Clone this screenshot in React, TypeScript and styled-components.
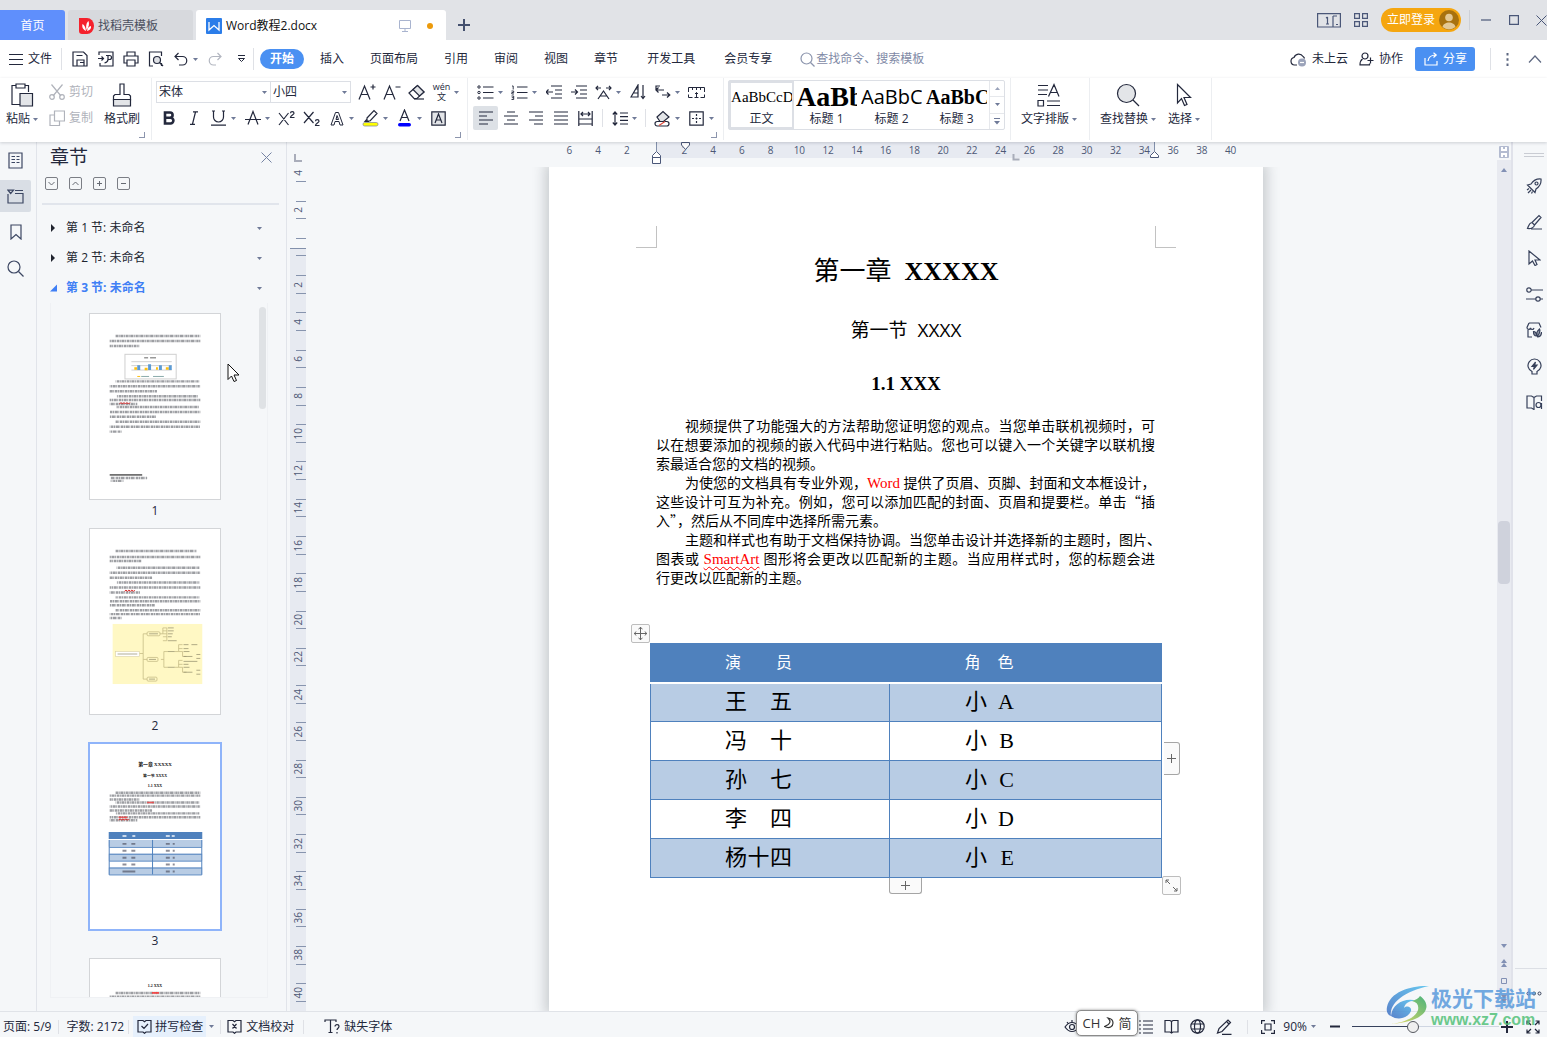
import React from "react";
import styled, { createGlobalStyle, css } from "styled-components";

const ui = `"Open Sans", "Noto Sans CJK SC", sans-serif`;
const serif = `"Liberation Serif", "Noto Sans CJK SC", serif`;

const Global = createGlobalStyle`
  * { box-sizing: border-box; }
  body { margin: 0; background: #f5f7f9; color: #23283c; font: 12px/16px ${ui}; overflow: hidden; }
  button, input, select { font: inherit; color: inherit; margin: 0; padding: 0; border: 0; background: none; }
  button { cursor: default; white-space: nowrap; }
  h1, h2, h3, p, figure { margin: 0; }
  svg { display: block; flex: none; }
`;

/* ---------- icons ---------- */
type IconProps = { w?: number; h?: number; box?: string; sw?: number; children: React.ReactNode };
const Icon = ({ w = 16, h = w, box, sw = 1.2, children }: IconProps) => (
  <svg width={w} height={h} viewBox={box || `0 0 ${w} ${h}`} fill="none" stroke="currentColor" strokeWidth={sw} aria-hidden="true">
    {children}
  </svg>
);
const Caret = () => (
  <svg width="5" height="3" viewBox="0 0 5 3" aria-hidden="true"><path d="M0 0h5L2.5 3z" fill="#6f7a98" /></svg>
);

const icons = {
  menu: <Icon w={14} h={12} sw={1}><path d="M0 1.500h14M0 6.500h14M0 11.500h14" /></Icon>,
  save: <Icon><path d="M1 1h10.5L15 4.5V15H1zM5 15V9h7v6M4.5 4.5h6M12 11.5H8" /></Icon>,
  exportPdf: <Icon><path d="M1 4V1h14v14H2v-3M0 7.5h5M3.5 5.5l2 2-2 2M8 4.500h3.500a2 2 0 0 1 0 4H10M10 4.500v4c0 2-1.500 3-3.500 3.500" /></Icon>,
  print: <Icon><path d="M4 5V1h8v4M4 12H1V5h14v7h-3M4 9h8v6H4z" /></Icon>,
  preview: <Icon><path d="M5 15H1.500V1h12v4M13.500 12v3" /><circle cx="9" cy="9" r="3.500" fill="#dfe1e5" /><path d="M11.500 11.500L15 15" /></Icon>,
  undo: <Icon w={14} h={14}><path d="M4.500 1L1 4.500 4.500 8M1 4.500h7.500a4.250 4.250 0 0 1 0 8.500H5" /></Icon>,
  redo: <Icon w={14} h={14}><path d="M9.500 1L13 4.500 9.500 8M13 4.500H5.500a4.250 4.250 0 0 0 0 8.500H8" /></Icon>,
  more: <Icon w={9} h={8} sw={1}><path d="M1 .5h7M1.500 3.500L4.500 6.500 7.500 3.500z" /></Icon>,
  search: <Icon w={15} sw={1.2}><circle cx="6.500" cy="6.500" r="5.500" /><path d="M10.500 10.500L14.500 14.500" /></Icon>,
  cloud: <Icon w={17} h={15}><path d="M7 13H4.500a3.800 3.800 0 0 1-.5-7.500A5 5 0 0 1 13 4.500M13 4.500a3 3 0 0 1 1.500 2" /><circle cx="12" cy="10.500" r="4" fill="#9ba3ba" stroke="none" /><path d="M10 10.500h4" stroke="#fff" /></Icon>,
  addUser: <Icon w={15} h={14}><circle cx="6" cy="4" r="3" /><path d="M3.500 7C2 8 1 9.500 1 12.800h9.500v-1.300M11.500 5.500v6M8.500 8.500h6" /></Icon>,
  share: <Icon w={14} h={14}><path d="M1 6v7h12V9M4 9c.5-4 3-6 8-6M9.500.8L12.200 3 9.500 5.500" /></Icon>,
  dots: <Icon w={3} h={13}><path d="M1.500 0v2.500M1.500 5.200v2.500M1.500 10.500V13" strokeWidth="2" /></Icon>,
  up: <Icon w={14} h={8}><path d="M1 7.500L7 1l6 6.500" /></Icon>,
  paste: <Icon w={24}><path d="M10 21.500H2V2.500h4M15 2.500h3.500V9" /><path d="M6 1h9v4H6z" /><path d="M10 10.500h12.500v12.500H10z" fill="#e3e5e8" /></Icon>,
  cut: <Icon><path d="M2.500.5L12 12M13.500.5L4 12" /><circle cx="3" cy="13" r="2.300" /><circle cx="13" cy="13" r="2.300" /></Icon>,
  copy: <Icon><path d="M5.500 1h10v10h-10zM5.500 5H1v10.500h9.500V11" /></Icon>,
  brush: <Icon w={20} h={24}><path d="M8 1h4v10.500h5l1.500 1.500v4h-17v-4L3 11.500h5z" /><path d="M1.500 16.500h17V23h-17z" fill="#e3e5e8" /></Icon>,
  grow: <Icon w={18} h={16}><path d="M1 15.500L6.500 2 12 15.500M3 10.500h7M12.500 3h5M15 .5v5" /></Icon>,
  shrink: <Icon w={18} h={16}><path d="M1 15.500L6.500 2 12 15.500M3 10.500h7M12.500 3h5" /></Icon>,
  eraser: <Icon w={17} h={16}><path d="M1 9l8.500-7.500L16 8l-7 6.500H6z" /><path d="M5 5.500L9.500 1.500 16 8l-4.500 4z" fill="#e3e5e8" /><path d="M6 15h10" /></Icon>,
  bold: <Icon w={14} h={14} sw={2.600}><path d="M3 1.500h5a2.600 2.600 0 0 1 0 5.200H3zM3 6.700h5.500a2.900 2.900 0 0 1 0 5.800H3z" /></Icon>,
  italic: <Icon w={12} h={14}><path d="M5 .8h5M2 13.300h5M7.500 1L4.500 13" /></Icon>,
  underline: <Icon w={15} h={16}><path d="M1 1h3M11 1h3M2.500 1v6a5 5 0 0 0 10 0V1M0 15.200h15" /></Icon>,
  strike: <Icon w={16} h={16}><path d="M3 14.500L8 1.500l5 13M0 9.500h16" /></Icon>,
  sup: <Icon w={17} h={15}><path d="M1 2l9.500 12M10.500 2L1 14M12.500 2.200c0-2 3.500-2 3.500 0 0 1.500-3.500 2.300-3.500 4.300h4" /></Icon>,
  sub: <Icon w={17} h={15}><path d="M1 1l9.500 11M10.500 1L1 12M12.500 10.200c0-2 3.500-2 3.500 0 0 1.500-3.500 2.300-3.500 4.300h4" /></Icon>,
  outlineA: <Icon w={14} h={15} sw={1}><path d="M1 14L5.500 1.500h3L13 14h-3L9 10.500H5L4 14zM6 8.500L7 4.500l1.500 4z" /></Icon>,
  highlight: <Icon w={17} h={18}><path d="M5 9l7-7.500 3 3-7 7.500H5zM5 10l-2 2.500h4" /><rect x="1" y="13.500" width="15" height="3.500" rx="1.700" fill="#ffff00" stroke="#8a8f9d" strokeWidth=".8" /></Icon>,
  colorA: <Icon w={15} h={18}><path d="M3 12L7.500 1 12 12M4.500 8.500h6" /><rect x="1" y="14" width="13" height="3.500" rx="1.700" fill="#0000ff" stroke="none" /></Icon>,
  boxA: <Icon w={15} h={15}><path d="M.8.8h13.400v13.400H.8z" fill="#e3e5e8" /><path d="M4 12l3.500-9L11 12M5 9h5" /></Icon>,
  bullets: <Icon w={17} h={15}><circle cx="2" cy="2" r="1.200" strokeWidth="1" /><circle cx="2" cy="7.500" r="1.200" strokeWidth="1" /><circle cx="2" cy="13" r="1.200" strokeWidth="1" /><path d="M6 2h10.500M6 7.500h10.500M6 13h10.500" /></Icon>,
  numbers: <Icon w={17} h={15}><path d="M1 1h1.200v3.500M.5 6h2.200v1.500H.8V9H3M.5 11h2.200v3.500H.5M.8 12.700h2" strokeWidth=".9" /><path d="M6 2h10.500M6 7.500h10.500M6 13h10.500" /></Icon>,
  outdent: <Icon w={16} h={14}><path d="M5 1h11M9 5h7M9 9h7M5 13h11M0 7h7M2.500 4.500L0 7l2.500 2.500" /></Icon>,
  indent: <Icon w={16} h={14}><path d="M5 1h11M9 5h7M9 9h7M5 13h11M0 7h6.500M4 4.500L6.500 7 4 9.500" /></Icon>,
  charScale: <Icon w={17} h={15}><path d="M1 3h5M3 .8L1 3l2 2.200M11 3h5M14 .8L16 3l-2 2.200M3 14L8.500 6l5.500 8M5.500 11h6" /></Icon>,
  sort: <Icon w={16} h={16}><path d="M1 13L8 1v12zM3.500 9H8M5.500 5H8M13 1v13.500M11 12l2 2.500 2-2.500" /></Icon>,
  wrap: <Icon w={16} h={14}><path d="M5 1H1v4h8M3.500 2.500L1 5l2.500 2.500M7 10h8M12 7.500l2.800 2.500L12 12.500" /></Icon>,
  tabs: <Icon w={17} h={13} sw={1}><path d="M.5 6V1.500h16V6M4.500 1.500V4M8.500 1.500V4M12.500 1.500V4M.5 8.500v3h4M16.500 8.500v3h-4M8.500 6.500v5M6.500 11.500h4M7 8l1.500-1.500L10 8" /></Icon>,
  alignL: <Icon w={14} h={14}><path d="M0 1h14M0 5h8M0 9h14M0 13h9" /></Icon>,
  alignC: <Icon w={14} h={14}><path d="M3 1h8M0 5h14M3 9h8M0 13h14" /></Icon>,
  alignR: <Icon w={14} h={14}><path d="M0 1h14M6 5h8M0 9h14M5 13h9" /></Icon>,
  justify: <Icon w={14} h={14}><path d="M0 1h14M0 5h14M0 9h14M0 13h14" /></Icon>,
  distribute: <Icon w={15} h={15}><path d="M.8 0v15M14.200 0v15M3 3h9M5 1L3 3l2 2M10 1l2 2-2 2M1 8h13M1 13h13" /></Icon>,
  lineGap: <Icon w={16} h={15}><path d="M3 1v13M.8 3.500L3 1l2.200 2.500M.8 11.500L3 14l2.200-2.500M8 2h8M8 5.600h8M8 9.300h8M8 13h8" /></Icon>,
  fill: <Icon w={17} h={17}><path d="M3 7l6-5.500L15 7l-5.500 4.500H6z" fill="#e3e5e8" /><rect x="1" y="11.500" width="14" height="4.500" rx="2.200" fill="#fff" /><path d="M5 15.500l6-4" stroke="#e04a3a" /></Icon>,
  borders: <Icon w={15} h={15}><path d="M.8.8h13.400v13.400H.8z" /><path d="M7.500 3v9.500M3 7.500h9.500" strokeDasharray="2 1.500" /></Icon>,
  textLayout: <Icon w={24}><path d="M1 2.500h10M1 7h10M1 11.500h9M11.500 13.500L17 1.500l5 12M13.500 9.500h7M1 17.500h5.500V23H1zM10 18h13M10 22.500h13" /></Icon>,
  find: <Icon w={24}><circle cx="10.500" cy="10.500" r="9" fill="#e3e5e8" /><path d="M17 17l6 6" /></Icon>,
  pointer: <Icon w={16} h={24}><path d="M1.500 1.500v18.500l4-4.500 3 7 2.500-1-3-7h6.500z" /></Icon>,
  close: <Icon w={11} h={11} sw={1}><path d="M.5.5l10 10M10.500.5l-10 10" /></Icon>,
  rail1: <Icon w={15} h={17}><path d="M1 1h13v15H1zM3.500 4.500h3.500M3.500 7.500h3.500M3.500 10.500h3.500M8.500 4.500h3M8.500 7.500h3M8.500 10.500h3" /></Icon>,
  rail2: <Icon w={17} h={15}><path d="M1 5v9h15V4.500H8M8 1.500h8M1 1.200h5.500L3.700 4.500z" /></Icon>,
  bookmark: <Icon w={12} h={16}><path d="M1 1h10v14l-5-4.500L1 15z" /></Icon>,
  railFind: <Icon w={17}><circle cx="7" cy="7" r="6" /><path d="M11.500 11.500l5 5" /></Icon>,
  rocket: <Icon><path d="M15 1c-5-.5-8 2-10 5L1.500 7l2 2 3.500 3.500 2 2 1-3.500c3-2 5.500-5 5-10zM1 12l2-1.500M2 15l3-3M5.500 15.500L6.500 13.500" /><circle cx="10.500" cy="5.500" r="1.500" /></Icon>,
  paint: <Icon><path d="M6 8.500L13 1.500l2 2L8.500 11M6 8.500L8.500 11c-.5 3-4 4-7 3.500 1.500-3.500 1.500-5.500 4.500-6zM5 15h11" /></Icon>,
  cursor: <Icon w={14} h={16}><path d="M2 1v13l3.500-3 2.500 4.500 2-1-2-4.500h5z" /></Icon>,
  sliders: <Icon w={17} h={15}><circle cx="3" cy="3" r="2.200" /><circle cx="12" cy="12" r="2.200" /><path d="M5.200 3H17M0 12h9.800M14.200 12H17" /></Icon>,
  shop: <Icon><path d="M3 1h10l2 4.500M3 1L1 5.500c0 2.500 3 2.500 3.500.5.500 2 3 2 3.500 0M2 8v7h4" /><path d="M7.500 9.500c2 0 3 1 3 4.500-2 0-3-1.500-3-4.500zM13.500 7c1.500 3-1 6-2 7.500-1.500-3-.5-5.500 2-7.500zM15.500 10c0 3-1.500 5-4 5" fill="#9aa0ae" /></Icon>,
  bulb: <Icon w={15} h={17}><path d="M5 16h5v-2.500a6.500 6.500 0 1 0-5 0z" /><path d="M8.500 4L5 8.500h2.500L6.500 11.500 10 7H7.500z" fill="currentColor" /></Icon>,
  bookFind: <Icon w={17} h={15}><path d="M8 2.500L5.500 1H1v12h4.500L8 14.500zM8 2.500L10.500 1H15.500v5" /><circle cx="12.500" cy="10" r="2.500" /><path d="M15.500 8v6" /></Icon>,
  spell: <Icon w={15} h={15}><path d="M6 1.500H1v11.500h5l1.500 1.300L9 13h5V1.500H9L7.500 2.800zM4.500 7l2.500 2.500 4-4.500" /></Icon>,
  proof: <Icon w={15} h={15}><path d="M6 1.500H1v11.500h5l1.500 1.300L9 13h5V1.500H9L7.500 2.800zM5.500 5l4 4.500M9.500 5l-4 4.500" /></Icon>,
  fontMiss: <Icon w={16} h={15}><path d="M1 3V1h11v2M6.500 1v12.500M4.500 13.500h4M11 7.500c0-2.500 4-2.500 4 0 0 1.700-2 1.700-2 3.500M13 13v1.500" /></Icon>,
  eye: <Icon><path d="M1 8c4-6 10-6 14 0-4 6-10 6-14 0zM3 3l1.500 2M8 1v2" /><circle cx="8" cy="8" r="2.500" /></Icon>,
  list: <Icon w={14} h={14}><path d="M0 1h2M4 1h10M0 5h2M4 5h10M0 9h2M4 9h10M0 13h2M4 13h10" /></Icon>,
  book: <Icon w={15} h={15}><path d="M7.500 2.500L6 1.500H1v11.500h5l1.500 1L9 13h5V1.500H9zV14" /></Icon>,
  globe: <Icon w={15}><circle cx="7.500" cy="7.500" r="6.700" /><ellipse cx="7.500" cy="7.500" rx="3" ry="6.700" /><path d="M1.500 5h12M1.500 10h12" /></Icon>,
  pen: <Icon><path d="M1.500 14L3 9.500 12 1l2.500 2.500L6 12.500zM11 3l2 2M6 15.300h9.500" /></Icon>,
  fit: <Icon w={14} h={14}><path d="M.6 4V.6H4M10 .6h3.400V4M13.400 10v3.400H10M4 13.400H.6V10M4 4h6v6H4z" /></Icon>,
  full: <Icon w={14} h={14}><path d="M9 5l4-4M9.500 1H13v3.500M5 5L1 1M1 4.500V1h3.500M9 9l4 4M13 9.500V13H9.500M5 9l-4 4M1 9.500V13h3.500" /></Icon>,
  plus: <Icon w={12} h={12} sw={2}><path d="M6 0v12M0 6h12" /></Icon>,
  minus: <Icon w={10} h={3} sw={2}><path d="M0 1.500h10" /></Icon>,
};

/* ---------- frame ---------- */
const Shell = styled.div`position: relative; display: flex; flex-direction: column; height: 100vh; overflow: hidden;`;
const Spacer = styled.div`flex: 1;`;
const Rule = styled.span<{ $h: number; $m?: number; $c?: string }>`
  flex: none; width: 1px; height: ${p => p.$h}px; margin: 0 ${p => p.$m || 0}px; background: ${p => p.$c || "#dfe1e6"};
`;

const TitleBar = styled.header`display: flex; align-items: flex-end; height: 40px; background: #e1e3e7; overflow: hidden;`;
const Tab = styled.button<{ $w: number; $kind: "home" | "idle" | "active" }>`
  display: flex; align-items: center; gap: 4px; flex: none; width: ${p => p.$w}px; height: 30px; margin-right: 3px; padding: 1px 11px 0;
  border-radius: 3px 3px 0 0; text-align: left; background: #d7d9dd; color: #4b5060;
  ${p => p.$kind === "home" && css`justify-content: center; background: #5f8ffc; color: #fff; border-radius: 0 3px 0 0;`}
  ${p => p.$kind === "active" && css`background: #fff; color: #111; padding: 1px 13px 0 10px;`}
`;
const Unsaved = styled.span`width: 6px; height: 6px; margin-left: 12px; border-radius: 3px; background: #ec9a0b;`;
const NewTab = styled.button`display: flex; align-items: center; justify-content: center; width: 30px; height: 30px; color: #44506e;`;
const WindowTools = styled.div`display: flex; align-items: center; height: 40px; gap: 13px; color: #4a5778; margin-right: -2px;`;
const Login = styled.button`
  display: flex; align-items: center; gap: 4px; height: 24px; padding: 0 2px 0 6px; border-radius: 12px; background: #f5a60f; color: #fff;
`;
const WinButton = styled.button`display: flex; align-items: center; justify-content: center; width: 15px; height: 24px;`;

const MenuBar = styled.nav`display: flex; align-items: center; height: 38px; padding-left: 9px; background: #fff; color: #23283c;`;
const IconButton = styled.button<{ $w?: number; $dim?: boolean; $c?: string }>`
  display: flex; align-items: center; justify-content: center; flex: none; gap: 5px; width: ${p => (p.$w ? p.$w + "px" : "auto")}; height: 24px;
  color: ${p => p.$c || (p.$dim ? "#b2b6c0" : "inherit")};
`;
const MenuTabs = styled.div<{ $gap: number; $l: number }>`display: flex; align-items: center; gap: ${p => p.$gap}px; margin-left: ${p => p.$l}px;`;
const MenuItem = styled.button<{ $on?: boolean }>`
  height: 20px; ${p => p.$on && css`padding: 0 10px; margin-right: -10px; border-radius: 10px; background: #4a90f2; color: #fff; font-weight: bold;`}
`;
const Search = styled.label`display: flex; align-items: center; gap: 1px; margin-left: 28px; color: #8c95ad;
  input { width: 120px; outline: 0; } input::placeholder { color: #7f8aa6; opacity: 1; }`;
const Share = styled.button`
  display: flex; align-items: center; gap: 5px; height: 24px; margin: 0 15px 0 12px; padding: 0 8px 0 9px; border-radius: 3px; background: #4a90f2; color: #fff;
`;

/* ---------- ribbon ---------- */
const Ribbon = styled.section`
  position: relative; z-index: 2; display: flex; flex: none; height: 64px; background: #fff; box-shadow: 0 1px 3px rgba(40, 50, 70, .2);
`;
const Group = styled.div<{ $l: number; $r: number; $gap?: number; $corner?: boolean }>`
  position: relative; display: flex; flex: none; gap: ${p => p.$gap || 0}px; height: 62px; padding: 1px ${p => p.$r}px 0 ${p => p.$l}px; border-right: 1px solid #eceef1;
  ${p => p.$corner && css`&::after { content: ""; position: absolute; right: 6px; bottom: 2px; width: 5px; height: 5px; border: solid #8c95ad; border-width: 0 1px 1px 0; }`}
`;
const Rows = styled.div`display: flex; flex-direction: column;`;
const Row = styled.div`display: flex; align-items: center; height: 26px;`;
const Big = styled.button`display: flex; flex-direction: column; align-items: center; height: 52px;`;
const BigArt = styled.span`display: flex; align-items: center; height: 32px;`;
const BigLabel = styled.span`display: flex; align-items: center; gap: 3px;`;
const SmallAction = styled.button`display: flex; align-items: center; gap: 4px; height: 26px; color: #b0b3bb;`;
const ToolButton = styled.button<{ $on?: boolean; $caret?: boolean }>`
  display: flex; align-items: center; flex: none; width: ${p => (p.$caret ? 34 : 25)}px; height: 24px; border-radius: 2px; background: ${p => (p.$on ? "#dde1e6" : "none")};
`;
const Glyph = styled.span`display: flex; align-items: center; justify-content: center; width: 25px;`;
const Combo = styled.span<{ $w: number }>`
  display: flex; align-items: center; width: ${p => p.$w}px; height: 22px; padding-right: 3px; border: 1px solid #dcdfe5; & + & { border-left: 0; }
  select { flex: 1; min-width: 0; height: 20px; padding-left: 2px; appearance: none; outline: 0; }
`;
const Tool = ({ icon, label, caret, on }: { icon: React.ReactNode; label: string; caret?: boolean; on?: boolean }) => (
  <ToolButton aria-label={label} $caret={caret} $on={on}><Glyph>{icon}</Glyph>{caret && <Caret />}</ToolButton>
);
const BigTool = ({ icon, label, caret }: { icon: React.ReactNode; label: string; caret?: boolean }) => (
  <Big><BigArt>{icon}</BigArt><BigLabel>{label}{caret && <Caret />}</BigLabel></Big>
);
const RowRule = styled.span`width: 1px; height: 18px; margin: 0 4px; background: #dfe1e6;`;
const WenMark = styled.span`display: flex; flex-direction: column; align-items: center; font-size: 9px; line-height: 10px;`;

const Gallery = styled.div`display: flex; height: 50px; margin-top: 1px; border: 1px solid #dcdfe5; border-radius: 2px;`;
const StyleCard = styled.button<{ $on?: boolean }>`
  display: flex; flex-direction: column; align-items: center; justify-content: flex-end; width: 65px; height: 48px; padding: 0 1px;
  border: 2px solid ${p => (p.$on ? "#dcdfe5" : "transparent")};
`;
const Sample = styled.span<{ $size: number; $bold?: boolean; $sans?: boolean }>`
  width: 61px; height: 28px; overflow: hidden; text-align: left; color: #000;
  font: ${p => (p.$bold ? "bold" : "normal")} ${p => p.$size}px/28px ${p => (p.$sans ? ui : serif)};
`;
const GalleryScroll = styled.div`display: flex; flex-direction: column; width: 15px; border-left: 1px solid #e6e8ec;
  button { flex: 1; display: flex; align-items: center; justify-content: center; color: #7d88a6; }
  button + button { border-top: 1px solid #e6e8ec; }`;

/* ---------- workspace ---------- */
const Workspace = styled.div`display: flex; flex: 1; min-height: 0;`;
const Rail = styled.aside`display: flex; flex-direction: column; gap: 4px; flex: none; width: 37px; padding-top: 2px; border-right: 1px solid #e1e4ea; color: #3c4763;`;
const RailButton = styled.button<{ $on?: boolean }>`
  display: flex; align-items: center; justify-content: center; width: 31px; height: 32px; border-radius: 0 2px 2px 0; background: ${p => (p.$on ? "#d9dee5" : "none")};
`;
const Panel = styled.aside`display: flex; flex-direction: column; flex: none; width: 250px; border-right: 1px solid #e1e4ea;`;
const PanelHead = styled.div`display: flex; align-items: center; justify-content: space-between; height: 30px; padding: 0 14px 0 13px; color: #7583a3;
  h2 { font: 19px/28px ${ui}; color: #23283c; }`;
const PanelTools = styled.div`display: flex; align-items: center; gap: 11px; height: 23px; padding-left: 8px;
  button { display: flex; align-items: center; justify-content: center; width: 13px; height: 13px; border: 1px solid #7b7e85; border-radius: 2px; color: #666a73; }`;
const PanelRule = styled.hr`flex: none; width: 237px; height: 2px; margin: 8px 7px 8px 5px; border: 0; background: #e1e5ec;`;
const Section = styled.button<{ $open?: boolean }>`
  display: flex; align-items: center; flex: none; gap: 9px; height: 30px; padding: 0 24px 0 13px; text-align: left;
  color: ${p => (p.$open ? "#3f7ff5" : "#20242f")}; font-weight: ${p => (p.$open ? "bold" : "normal")};
  span { flex: 1; white-space: pre; }
`;
const ThumbList = styled.div`
  display: flex; flex: 1; min-height: 0; overflow: hidden; margin: 0 18px 13px 13px; padding: 10px 0 0 38px; border: solid #eff1f4; border-width: 0 1px 1px;
`;
const Thumb = styled.figure<{ $on?: boolean }>`
  width: 132px; height: 215px;
  svg { background: #fff; border: 1px solid ${p => (p.$on ? "#8fb4fa" : "#d3d5d8")}; outline: ${p => (p.$on ? "1px solid #8fb4fa" : "none")}; }
  figcaption { text-align: center; line-height: 22px; }
`;
const ThumbTrack = styled.div`width: 7px; height: 102px; margin: -6px 0 0 38px; border-radius: 4px; background: #dfe2e5;`;

const DocArea = styled.main`display: flex; flex: 1; min-width: 0;`;
const VRuler = styled.div`display: flex; flex-direction: column; flex: none; width: 28px; padding: 12px 9px 0 3px;`;
const VCell = styled.div<{ $live?: boolean; $zero?: boolean }>`
  position: relative; display: flex; align-items: center; justify-content: center; flex: 1; min-height: 37px; color: #4d5875; font-size: 10px;
  background: ${p => (p.$live ? "#e7eaf1" : p.$zero ? "linear-gradient(transparent 50%, #8290ab 50%, #8290ab calc(50% + 1px), #e7eaf1 calc(50% + 1px))" : "none")};
  &::before { content: ""; position: absolute; right: 0; top: 25%; bottom: 25%; width: 10px; border: solid #8794ae; border-width: 1px 0; }
  &:first-child::before { border-top: 0; }
  &:first-child::after { content: ""; position: absolute; left: 4px; top: 0; width: 6px; height: 6px; border: solid #a9adba; border-width: 0 0 2px 2px; }
  span { writing-mode: vertical-rl; transform: rotate(180deg); line-height: 14px; }
`;
const Center = styled.div`display: flex; flex-direction: column; align-items: center; flex: 1; min-width: 0; overflow: hidden;`;
const HRuler = styled.div`
  position: relative; display: flex; flex: none; width: 714px; height: 25px; padding: 0 18px 0 6px; color: #4d5875; font-size: 10px; line-height: 16px;
  background: linear-gradient(#e7eaf1, #e7eaf1) 107px 0 / 498px 16px no-repeat;
  span { flex: 1; text-align: center; }
`;
const RulerMarks = styled.svg`position: absolute; left: 0; top: 0;`;
const Paper = styled.div`align-self: stretch; display: flex; justify-content: center; flex: 1; min-height: 0; overflow: hidden;`;
const Page = styled.article`width: 714px; padding-top: 59px; background: #fff; color: #000; box-shadow: 0 0 12px 4px rgba(60, 65, 75, .24);`;
const Corners = styled.div`display: flex; justify-content: space-between; width: 540px; height: 22px; margin-left: 87px;
  i { width: 21px; border: solid #c2c2c2; border-width: 0 1px 1px 0; } i + i { border-width: 0 0 1px 1px; }`;
const Title = styled.h1`margin-top: 4px; text-align: center; white-space: pre; font: 26px/40px ${serif}; b { font-weight: bold; }`;
const Subtitle = styled.h2`margin-top: 18px; text-align: center; white-space: pre; font: 19px/40px ${ui};`;
const Heading = styled.h3`margin-top: 20px; text-align: center; font: bold 19px/28px ${serif};`;
const Body = styled.div`width: 499px; margin: 19px 0 0 107px; font: 14px/19px ${serif};`;
const Line = styled.span<{ $first?: boolean; $last?: boolean }>`
  display: block; height: 19px; padding-left: ${p => (p.$first ? 29 : 0)}px; white-space: nowrap; text-align-last: ${p => (p.$last ? "left" : "justify")};
`;
const Quote = styled.span`font-family: "Noto Sans CJK SC", sans-serif; line-height: 16px;`;
const Red = styled.span<{ $wavy?: boolean }>`font-size: 15px; line-height: 16px; color: #f00; ${p => p.$wavy && css`text-decoration: underline wavy #f00 1px; text-underline-offset: 2px;`}`;

const TableWrap = styled.div`position: relative; width: 512px; margin: 55px 0 0 101px;`;
const Table = styled.table`
  width: 512px; border-collapse: collapse; table-layout: fixed; border: 1px solid #4f81bd;
  th, td { height: 39px; padding: 0 0 0 74px; text-align: left; line-height: 30px; font-weight: normal; }
  th { padding-bottom: 2px; background: #4f81bd; color: #fff; font-size: 16px; border-bottom: 2px solid #fff; }
  th + th, td + td { padding-left: 75px; }
  td { border: 1px solid #4f81bd; font: 22px/30px ${serif}; }
  th:first-child { width: 239px; }
  tbody tr:nth-child(odd) td { background: #b8cce4; }
  tbody tr:first-child td { border-top: 0; }
`;
const Spread = styled.span<{ $w: number }>`display: block; width: ${p => p.$w}px; text-align-last: justify; white-space: nowrap;`;
const TableHandle = styled.button<{ $l: number; $t: number; $w: number; $h: number; $open?: "left" | "top" }>`
  position: absolute; left: ${p => p.$l}px; top: ${p => p.$t}px; display: flex; align-items: center; justify-content: center;
  width: ${p => p.$w}px; height: ${p => p.$h}px; border: 1px solid #bdbdbd; border-radius: 2px; background: #fafafa; color: #666;
  ${p => p.$open === "left" && css`border-left: 0; border-radius: 0 3px 3px 0; border-color: #a5a5a5;`}
  ${p => p.$open === "top" && css`border-top: 0; border-radius: 0 0 3px 3px; border-color: #a5a5a5;`}
`;

const ScrollColumn = styled.div`display: flex; flex-direction: column; align-items: center; flex: none; width: 16px; padding-right: 2px; background: linear-gradient(#e0e2ea, #e0e2ea) 100% 0 / 2px 100% no-repeat; color: #8290b4;`;
const ScrollTop = styled.div`display: flex; align-items: center; justify-content: center; height: 18px; padding-top: 2px;`;
const ScrollTrack = styled.div`display: flex; flex-direction: column; align-items: center; flex: 1; width: 14px; padding: 8px 0 8px; background: #e8eaf0;`;
const ScrollThumb = styled.div`width: 12px; height: 63px; border-radius: 4px; background: #cfd2dc;`;
const ScrollGap = styled.div<{ $n: number }>`flex: ${p => p.$n};`;
const ScrollMarks = styled.div`display: flex; flex-direction: column; align-items: center; gap: 11px;`;

const RightRail = styled.aside`display: flex; flex-direction: column; flex: none; align-items: flex-end; gap: 4px; width: 34px; color: #36405a;
  button { display: flex; align-items: center; justify-content: center; width: 26px; height: 32px; }`;
const Grip = styled.div`width: 20px; height: 4px; margin: 11px 3px 9px 0; border: solid #c9ccd3; border-width: 1px 0;`;
const RailFoot = styled.div`display: flex; justify-content: flex-end; align-items: flex-end; width: 32px; height: 43px; padding-bottom: 2px; border-top: 1px solid #dcdfe5;`;

/* ---------- status bar ---------- */
const Status = styled.footer`display: flex; align-items: center; flex: none; height: 26px; padding: 4px 7px 0 3px; border-top: 1px solid #e0e3e8; color: #23283c; white-space: nowrap;`;
const StatusItem = styled.button<{ $on?: boolean; $gap?: number }>`
  display: flex; align-items: center; gap: 4px; height: 22px; margin-right: ${p => p.$gap || 0}px;
  ${p => p.$on && css`gap: 3px; padding: 0 3px 0 4px; background: #e6f0fc;`}
`;
const ViewIcons = styled.div`display: flex; align-items: center; gap: 11px; margin-right: 15px;`;
const ZoomSlider = styled.input`
  appearance: none; width: 147px; height: 14px; margin: 0 2px 0 12px;
  background: linear-gradient(90deg, #36415c 41%, #cfd6e2 41%) 0 50% / 100% 1px no-repeat;
  &::-webkit-slider-thumb { appearance: none; width: 12px; height: 12px; border: 1px solid #55585f; border-radius: 6px; background: #efefef; }
`;
const Ime = styled.div`
  position: absolute; z-index: 3; right: 409px; bottom: 1px; display: flex; align-items: center; justify-content: center; gap: 4px; width: 62px; height: 26px;
  border: 1px solid #8b8b8b; border-radius: 5px; background: #fff; box-shadow: 0 0 3px rgba(0, 0, 0, .45); color: #333; font-size: 13px; white-space: nowrap;
`;
const Watermark = styled.div`
  position: absolute; z-index: 4; right: 11px; bottom: 6px; display: flex; pointer-events: none; opacity: .85;
  font: bold 21px/24px "Noto Sans CJK SC", sans-serif; color: #5b9bdc;
  small { display: block; font: bold 16px/22px "Liberation Sans", sans-serif; color: #54c27a; }
`;
const MouseCursor = styled.svg`position: absolute; z-index: 5; left: 227px; top: 363px;`;

/* ---------- page thumbnails ---------- */
const Greek = ({ rows, from = 20 }: { rows: [number, number, number][]; from?: number }) => (
  <g stroke="#3c3f48" strokeWidth="2.500" strokeDasharray="2.400 .5 1.300 .6 3.200 .5 .9 .7" opacity=".5">
    {rows.map(([a, b, y], i) => <path key={i} d={`M${from + a} ${y}H${from + b}`} strokeDashoffset={i * 3} />)}
  </g>
);
const Squiggle = ({ x, y }: { x: number; y: number }) => <path d={`M${x} ${y}l1.500 -1.500l1.500 1.500l1.500 -1.500l1.500 1.500l1.500 -1.500l1.500 1.500l1.500 -1.500`} stroke="#d22" fill="none" />;
const Sheet = ({ children }: { children: React.ReactNode }) => <svg width="132" height="187" viewBox="0 0 132 187" aria-hidden="true">{children}</svg>;

const Sheet1 = () => (
  <Sheet>
    <Greek rows={[[6, 92, 22], [0, 92, 27], [0, 30, 32], [6, 91, 68], [0, 92, 73], [0, 48, 78], [7, 90, 83], [0, 92, 87], [0, 28, 91], [7, 91, 94], [0, 92, 99], [0, 47, 104], [6, 92, 109], [0, 92, 114], [0, 12, 119], [1, 38, 166], [1, 14, 169]]} />
    <rect x="35.500" y="40.500" width="52" height="25" fill="#fff" stroke="#cfcfcf" />
    <path d="M42 48h41M42 52h41M42 56.500h41" stroke="#bbb" strokeWidth=".7" />
    <path d="M55 44h4M61 44h6" stroke="#999" strokeWidth="1.500" />
    <path d="M45 55h3M55.500 55.500h3M67 55h2M77 55h3" stroke="#fdbf0f" strokeWidth="2.500" />
    <path d="M49.500 56.500v-5M60.500 56.500v-6M71.500 56.500v-5M81.500 56.500v-5" stroke="#5b9bd5" strokeWidth="3" />
    <path d="M48 63h3" stroke="#fdbf0f" /><path d="M52 63h8M64 63h11" stroke="#8aa" />
    <Squiggle x={30} y={91} />
    <path d="M20 163h33" stroke="#000" />
  </Sheet>
);
const Sheet2 = () => (
  <Sheet>
    <Greek rows={[[6, 88, 22], [0, 92, 28], [0, 32, 32], [7, 91, 39], [0, 92, 44], [0, 43, 49], [7, 91, 54], [0, 92, 59], [0, 31, 64], [6, 91, 69], [0, 92, 73], [0, 46, 77], [6, 92, 82], [0, 92, 86], [0, 12, 90]]} />
    <Squiggle x={35} y={63} />
    <rect x="23" y="96" width="91" height="61" fill="#fff8c4" />
    <g stroke="#c5bb86" strokeWidth=".8" fill="none">
      <path d="M50 126h4V106h4M54 126v6h4M54 132v20h4M71 106h3v-6h4M74 103h4M74 106h4M74 109h4M74 113h4v-13M72 132h3v-8h4M75 132v8h4M86 124h4v-7h4M90 121h4M90 124h4v5h4M86 140h4v-7h4M90 137h4M90 140h4v5h4" />
      <rect x="58" y="104" width="13" height="4" rx="1" /><rect x="58" y="130" width="11" height="4" rx="1" /><rect x="58" y="150" width="10" height="4" rx="1" />
    </g>
    <rect x="26" y="124" width="24" height="5" fill="#fff" stroke="#d8d0a8" strokeWidth=".6" />
    <path d="M28 126.500h20M60 106h9M60 132h7M60 152h6M79 100h6M79 103h6M79 106h5M79 109h4M79 113h9M79 124h7M79 140h7M95 117h5M103 117h6M95 121h5M95 124h6M95 129h9M108 127h4M108 131h4M95 134h14M95 137h5M95 140h6M95 145h9M108 143h4M108 147h4" stroke="#8f8a6a" strokeWidth="1" opacity=".7" />
  </Sheet>
);
const SheetTitle = styled.text<{ $s: number }>`font: bold ${p => p.$s}px ${serif}; text-anchor: middle; fill: #111;`;
const Sheet3 = () => (
  <Sheet>
    <SheetTitle x="66" y="22" $s={5}>第一章 XXXXX</SheetTitle>
    <SheetTitle x="66" y="33" $s={4}>第一节 XXXX</SheetTitle>
    <SheetTitle x="66" y="43" $s={4}>1.1 XXX</SheetTitle>
    <Greek rows={[[6, 92, 49], [0, 92, 52], [0, 30, 56], [6, 91, 59], [0, 92, 63], [0, 43, 67], [6, 91, 70], [0, 92, 74], [0, 28, 77]]} />
    <path d="M58 59h7M29 74h9" stroke="#f33" strokeWidth="1.500" opacity=".7" />
    <Squiggle x={29} y={77} />
    <path d="M19 89h95v44H19z" fill="#fff" />
    <path d="M19 89h95v7H19z" fill="#4f81bd" />
    <path d="M19 97h95v7H19zM19 111h95v7H19zM19 125h95v7H19z" fill="#b8cce4" />
    <path d="M19.500 97v35.500h94V97M19.500 104.500h94M19.500 111.500h94M19.500 118.500h94M19.500 125.500h94M63.500 97v35" stroke="#4f81bd" fill="none" />
    <path d="M33 93h4M43 93h3M77 93h4M83 93h3" stroke="#fff" strokeWidth="2" opacity=".7" />
    <path d="M33 101h4M42 101h4M77 101h4M84 101h2M33 108h4M42 108h4M77 108h4M84 108h2M33 115h4M42 115h4M77 115h4M84 115h2M33 122h4M42 122h4M77 122h4M84 122h2M33 129h13M77 129h4M84 129h2" stroke="#445" strokeWidth="2" opacity=".6" />
  </Sheet>
);
const Sheet4 = () => (
  <Sheet><SheetTitle x="66" y="28" $s={4}>1.2 XXX</SheetTitle><Greek rows={[[6, 92, 34], [0, 92, 38], [0, 30, 42]]} /><path d="M63 34h7" stroke="#f33" strokeWidth="1.500" /></Sheet>
);

/* ---------- data ---------- */
const menus = ["插入", "页面布局", "引用", "审阅", "视图", "章节"];
const extraMenus = ["开发工具", "会员专享"];
const vMarks = [4, 2, 0, ...Array.from({ length: 20 }, (_, i) => (i + 1) * 2)];
const hMarks = [6, 4, 2, 0, ...Array.from({ length: 20 }, (_, i) => (i + 1) * 2)];
const cast = [["王 五", "小 A"], ["冯 十", "小 B"], ["孙 七", "小 C"], ["李 四", "小 D"], ["杨十四", "小 E"]];
const pages = [Sheet1, Sheet2, Sheet3, Sheet4];

export default function App() {
  return (
    <Shell>
      <Global />
      <TitleBar>
        <Tab $w={65} $kind="home">首页</Tab>
        <Tab $w={125} $kind="idle">
          <svg width="15" height="16" viewBox="0 0 15 16"><path d="M0 0h8a7 8 0 0 1 0 16H3a3 3 0 0 1-3-3z" fill="#f5222d" /><path d="M7 13C3 11 3 8 3.500 6c2 1 3 3 3.500 7zM7.500 12C6.500 7 8 4 9.500 3c1 3 .5 6-2 9zM8 13c.5-3 2-4.500 4-5 .5 2.500-1 4.500-4 5z" fill="#fff" /></svg>
          找稻壳模板
        </Tab>
        <Tab $w={250} $kind="active">
          <svg width="16" height="16" viewBox="0 0 16 16"><rect width="16" height="16" rx="1" fill="#2b7de9" /><path d="M3 4v8l5-4.500L13 12V4" fill="none" stroke="#fff" strokeWidth="1.300" /></svg>
          Word教程2.docx
          <Spacer />
          <Icon w={12} h={12} sw={1}><g stroke="#a9b4cf"><path d="M.5.5h11v8H.5zM6 8.500v3M3 11.500h6" /></g></Icon>
          <Unsaved />
        </Tab>
        <NewTab aria-label="新建">{icons.plus}</NewTab>
        <Spacer />
        <WindowTools>
          <IconButton aria-label="窗口"><Icon w={24} h={15}><path d="M16 14H.6V.6h22.800V14H16zM16 3v11M16 3h4M10.500 4v7M9 5l1.500-1M9 11h3M19 11.500h2" /></Icon></IconButton>
          <IconButton aria-label="应用"><Icon w={14} h={14}><path d="M.6.6h4.800v4.800H.6zM8.600.6h4.800v4.800H8.600zM.6 8.600h4.800v4.800H.6zM8.600 8.600h4.800v4.800H8.600z" /></Icon></IconButton>
          <Login>立即登录
            <svg width="20" height="20" viewBox="0 0 20 20"><circle cx="10" cy="10" r="10" fill="#a8720f" /><circle cx="10" cy="7.500" r="3.800" fill="#e3c894" /><path d="M3.500 17c1-6 12-6 13 0a10 10 0 0 1-13 0z" fill="#e3c894" /></svg>
          </Login>
          <Rule $h={20} $c="#cdd0d6" $m={-5} />
          <WinButton aria-label="最小化"><Icon w={10} h={2}><path d="M0 1h10" /></Icon></WinButton>
          <WinButton aria-label="最大化"><Icon w={10} h={10}><path d="M.6.6h8.800v8.800H.6z" /></Icon></WinButton>
          <WinButton aria-label="关闭">{icons.close}</WinButton>
        </WindowTools>
      </TitleBar>

      <MenuBar>
        <IconButton>{icons.menu}文件</IconButton>
        <Rule $h={22} $m={9} />
        <IconButton $w={18} aria-label="保存">{icons.save}</IconButton>
        <IconButton $w={34} aria-label="输出为PDF">{icons.exportPdf}</IconButton>
        <IconButton $w={16} aria-label="打印">{icons.print}</IconButton>
        <IconButton $w={34} aria-label="打印预览">{icons.preview}</IconButton>
        <IconButton $w={26} aria-label="撤销">{icons.undo}<Caret /></IconButton>
        <IconButton $w={32} $dim aria-label="恢复">{icons.redo}</IconButton>
        <IconButton $w={20} aria-label="更多">{icons.more}</IconButton>
        <Rule $h={22} $m={2} />
        <MenuTabs $gap={26} $l={4}>
          <MenuItem $on>开始</MenuItem>
          {menus.map(m => <MenuItem key={m}>{m}</MenuItem>)}
        </MenuTabs>
        <MenuTabs $gap={29} $l={29}>
          {extraMenus.map(m => <MenuItem key={m}>{m}</MenuItem>)}
        </MenuTabs>
        <Search>{icons.search}<input aria-label="搜索" placeholder="查找命令、搜索模板" /></Search>
        <Spacer />
        <IconButton>{icons.cloud}未上云</IconButton>
        <Rule $h={0} $m={5} />
        <IconButton>{icons.addUser}协作</IconButton>
        <Share>{icons.share}分享</Share>
        <Rule $h={22} />
        <IconButton $w={32} $c="#5d6780" aria-label="选项">{icons.dots}</IconButton>
        <IconButton $w={24} $c="#5d6780" aria-label="收起">{icons.up}</IconButton>
      </MenuBar>

      <Ribbon>
        <Group $l={6} $r={11} $gap={11} $corner>
          <BigTool icon={icons.paste} label="粘贴" caret />
          <Rows>
            <SmallAction>{icons.cut}剪切</SmallAction>
            <SmallAction>{icons.copy}复制</SmallAction>
          </Rows>
          <BigTool icon={icons.brush} label="格式刷" />
        </Group>
        <Group $l={4} $r={4} $corner>
          <Rows>
            <Row>
              <Combo $w={115}><select aria-label="字体"><option>宋体</option></select><Caret /></Combo>
              <Combo $w={80}><select aria-label="字号"><option>小四</option></select><Caret /></Combo>
              <Rule $h={0} $m={1} />
              <Tool icon={icons.grow} label="增大字号" />
              <Tool icon={icons.shrink} label="减小字号" />
              <Tool icon={icons.eraser} label="清除格式" />
              <Tool icon={<WenMark><span>wén</span><span>文</span></WenMark>} label="拼音指南" caret />
            </Row>
            <Row>
              <Tool icon={icons.bold} label="加粗" />
              <Tool icon={icons.italic} label="倾斜" />
              <Tool icon={icons.underline} label="下划线" caret />
              <Tool icon={icons.strike} label="删除线" caret />
              <Tool icon={icons.sup} label="上标" />
              <Tool icon={icons.sub} label="下标" />
              <Tool icon={icons.outlineA} label="文字效果" caret />
              <Tool icon={icons.highlight} label="突出显示" caret />
              <Tool icon={icons.colorA} label="字体颜色" caret />
              <Tool icon={icons.boxA} label="字符底纹" />
            </Row>
          </Rows>
        </Group>
        <Group $l={5} $r={5} $corner>
          <Rows>
            <Row>
              <Tool icon={icons.bullets} label="项目符号" caret />
              <Tool icon={icons.numbers} label="编号" caret />
              <Tool icon={icons.outdent} label="减少缩进量" />
              <Tool icon={icons.indent} label="增加缩进量" />
              <Tool icon={icons.charScale} label="中文版式" caret />
              <Tool icon={icons.sort} label="排序" />
              <Tool icon={icons.wrap} label="显示段落标记" caret />
              <Tool icon={icons.tabs} label="制表位" />
            </Row>
            <Row>
              <Tool icon={icons.alignL} label="左对齐" on />
              <Tool icon={icons.alignC} label="居中" />
              <Tool icon={icons.alignR} label="右对齐" />
              <Tool icon={icons.justify} label="两端对齐" />
              <Tool icon={icons.distribute} label="分散对齐" />
              <RowRule />
              <Tool icon={icons.lineGap} label="行距" caret />
              <RowRule />
              <Tool icon={icons.fill} label="底纹颜色" caret />
              <Tool icon={icons.borders} label="边框" caret />
            </Row>
          </Rows>
        </Group>
        <Group $l={4} $r={5}>
          <Gallery>
            <StyleCard $on><Sample $size={15}>AaBbCcDd</Sample>正文</StyleCard>
            <StyleCard><Sample $size={28} $bold>AaBb</Sample>标题 1</StyleCard>
            <StyleCard><Sample $size={20} $sans>AaBbC</Sample>标题 2</StyleCard>
            <StyleCard><Sample $size={20} $bold>AaBbC</Sample>标题 3</StyleCard>
            <GalleryScroll>
              <button aria-label="上一行"><svg width="5" height="3"><path d="M0 3h5L2.500 0z" fill="#9aa3ba" /></svg></button>
              <button aria-label="下一行"><Caret /></button>
              <button aria-label="更多样式"><svg width="6" height="7"><path d="M0 .5h6" stroke="#6f7a98" /><path d="M0 3h6L3 6.500z" fill="#6f7a98" /></svg></button>
            </GalleryScroll>
          </Gallery>
        </Group>
        <Group $l={10} $r={12}><BigTool icon={icons.textLayout} label="文字排版" caret /></Group>
        <Group $l={10} $r={11} $gap={12}>
          <BigTool icon={icons.find} label="查找替换" caret />
          <BigTool icon={icons.pointer} label="选择" caret />
        </Group>
      </Ribbon>

      <Workspace>
        <Rail>
          <RailButton aria-label="目录">{icons.rail1}</RailButton>
          <RailButton aria-label="章节导航" $on>{icons.rail2}</RailButton>
          <RailButton aria-label="书签">{icons.bookmark}</RailButton>
          <RailButton aria-label="查找">{icons.railFind}</RailButton>
        </Rail>
        <Panel>
          <PanelHead><h2>章节</h2><button aria-label="关闭章节">{icons.close}</button></PanelHead>
          <PanelTools>
            <button aria-label="展开"><Icon w={7} h={5} sw={1}><path d="M.5 1l3 3 3-3" /></Icon></button>
            <button aria-label="折叠"><Icon w={7} h={5} sw={1}><path d="M.5 4l3-3 3 3" /></Icon></button>
            <button aria-label="新增节"><Icon w={7} h={7} sw={1}><path d="M3.500 1v5M1 3.500h5" /></Icon></button>
            <button aria-label="删除节"><Icon w={7} h={7} sw={1}><path d="M1 3.500h5" /></Icon></button>
          </PanelTools>
          <PanelRule />
          {[1, 2, 3].map(n => (
            <Section key={n} $open={n === 3}>
              <svg width="7" height="8" viewBox="0 0 7 8" fill="currentColor">{n === 3 ? <path d="M7 .5V7.500H0z" /> : <path d="M1 0l4 4-4 4z" />}</svg>
              <span>第 {n} 节: 未命名</span>
              <Caret />
            </Section>
          ))}
          <ThumbList>
            <div>
              {pages.map((P, i) => <Thumb key={i} $on={i === 2}><P /><figcaption>{i + 1}</figcaption></Thumb>)}
            </div>
            <ThumbTrack />
          </ThumbList>
        </Panel>

        <DocArea>
          <VRuler>
            {vMarks.map((n, i) => <VCell key={i} $live={i > 2} $zero={i === 2}>{n > 0 && <span>{n}</span>}</VCell>)}
          </VRuler>
          <Center>
            <HRuler>
              {hMarks.map((n, i) => <span key={i}>{n > 0 ? n : ""}</span>)}
              <RulerMarks width="714" height="25" fill="#fff" stroke="#4a5778">
                <path d="M107.500 0v9M605.500 0v9" fill="none" stroke="#8290ab" />
                <path d="M103.500 15.500v-2l4-4 4 4v2zM103.500 15.500h8v6h-8zM601.500 15.500v-2l4-4 4 4v2zM132.500.5h8v2.500l-4 4.500-4-4.500z" />
                <path d="M464.500 12v5.500h6" fill="none" stroke="#a9adba" strokeWidth="2" />
              </RulerMarks>
            </HRuler>
            <Paper>
              <Page>
                <Corners><i /><i /></Corners>
                <Title>{"第一章  "}<b>XXXXX</b></Title>
                <Subtitle>{"第一节  XXXX"}</Subtitle>
                <Heading>1.1 XXX</Heading>
                <Body>
                  <p>
                    <Line $first>视频提供了功能强大的方法帮助您证明您的观点。当您单击联机视频时，可</Line>
                    <Line>以在想要添加的视频的嵌入代码中进行粘贴。您也可以键入一个关键字以联机搜</Line>
                    <Line $last>索最适合您的文档的视频。</Line>
                  </p>
                  <p>
                    <Line $first>为使您的文档具有专业外观，<Red>Word</Red> 提供了页眉、页脚、封面和文本框设计，</Line>
                    <Line>这些设计可互为补充。例如，您可以添加匹配的封面、页眉和提要栏。单击<Quote>“</Quote>插</Line>
                    <Line $last>入<Quote>”</Quote>，然后从不同库中选择所需元素。</Line>
                  </p>
                  <p>
                    <Line $first>主题和样式也有助于文档保持协调。当您单击设计并选择新的主题时，图片、</Line>
                    <Line>图表或 <Red $wavy>SmartArt</Red> 图形将会更改以匹配新的主题。当应用样式时，您的标题会进</Line>
                    <Line $last>行更改以匹配新的主题。</Line>
                  </p>
                </Body>
                <TableWrap>
                  <Table>
                    <thead><tr><th><Spread $w={67}>演 员</Spread></th><th><Spread $w={49}>角 色</Spread></th></tr></thead>
                    <tbody>
                      {cast.map(([a, b]) => <tr key={a}><td><Spread $w={67}>{a}</Spread></td><td><Spread $w={49}>{b}</Spread></td></tr>)}
                    </tbody>
                  </Table>
                  <TableHandle aria-label="移动表格" $l={-19} $t={-19} $w={19} $h={19}>
                    <Icon w={13} h={13} sw={1}><path d="M6.500 0v13M0 6.500h13M4.500 2l2-1.500 2 1.500M4.500 11l2 1.500 2-1.500M2 4.500L.5 6.500 2 8.500M11 4.500l1.500 2-1.500 2" /></Icon>
                  </TableHandle>
                  <TableHandle aria-label="添加列" $open="left" $l={514} $t={99} $w={16} $h={33}><Icon w={9} h={9} sw={1}><path d="M4.500 0v9M0 4.500h9" /></Icon></TableHandle>
                  <TableHandle aria-label="添加行" $open="top" $l={239} $t={235} $w={33} $h={16}><Icon w={9} h={9} sw={1}><path d="M4.500 0v9M0 4.500h9" /></Icon></TableHandle>
                  <TableHandle aria-label="缩放表格" $l={512} $t={233} $w={19} $h={19}>
                    <Icon w={13} h={13} sw={1}><path d="M5 5L1 1M1 4V1h3M8 8l4 4M12 9v3H9" /></Icon>
                  </TableHandle>
                </TableWrap>
              </Page>
            </Paper>
          </Center>
          <ScrollColumn>
            <ScrollTop><svg width="10" height="12"><rect width="10" height="12" rx="1" fill="#b3bbd0" /><path d="M2 1h6v4H2zM2 7h6v4H2z" fill="#fff" /><path d="M4 1h2v2H4zM4 9h2v2H4z" fill="#b3bbd0" /></svg></ScrollTop>
            <ScrollTrack>
              <svg width="6" height="4"><path d="M0 4h6L3 0z" fill="#8290b4" /></svg>
              <ScrollGap $n={347} />
              <ScrollThumb />
              <ScrollGap $n={358} />
              <ScrollMarks>
                <svg width="6" height="4"><path d="M0 0h6L3 4z" fill="#8290b4" /></svg>
                <svg width="6" height="8"><path d="M0 4h6L3 0zM0 8h6L3 4z" fill="#8290b4" /></svg>
                <svg width="6" height="6"><path d="M.5.5h5v5h-5z" fill="none" stroke="#8290b4" /></svg>
                <svg width="6" height="8"><path d="M0 0h6L3 4zM0 4h6L3 8z" fill="#8290b4" /></svg>
              </ScrollMarks>
            </ScrollTrack>
          </ScrollColumn>
        </DocArea>

        <RightRail>
          <Grip />
          <button aria-label="快捷">{icons.rocket}</button>
          <button aria-label="样式">{icons.paint}</button>
          <button aria-label="选择窗格">{icons.cursor}</button>
          <button aria-label="属性">{icons.sliders}</button>
          <button aria-label="素材">{icons.shop}</button>
          <button aria-label="推荐">{icons.bulb}</button>
          <button aria-label="查阅">{icons.bookFind}</button>
          <Spacer />
          <RailFoot><button aria-label="更多工具"><svg width="16" height="5" viewBox="0 0 16 5" fill="none" stroke="#36405a"><circle cx="2.500" cy="2.500" r="1.500" /><circle cx="8" cy="2.500" r="1.500" /><circle cx="13.500" cy="2.500" r="1.500" /></svg></button></RailFoot>
        </RightRail>
      </Workspace>

      <Status>
        <StatusItem>页面: 5/9</StatusItem>
        <Rule $h={14} $m={7} />
        <StatusItem>字数: 2172</StatusItem>
        <Rule $h={14} $m={4} />
        <StatusItem $on>{icons.spell}拼写检查</StatusItem>
        <Rule $h={0} $m={1} />
        <Caret />
        <Rule $h={14} $m={6} />
        <StatusItem>{icons.proof}文档校对</StatusItem>
        <Rule $h={14} $m={9} />
        <Rule $h={0} $m={5} />
        <StatusItem>{icons.fontMiss}缺失字体</StatusItem>
        <Spacer />
        <ViewIcons>
          {icons.eye}
          <Rule $h={0} $m={18} />
          <button aria-label="大纲">{icons.list}</button>
          <button aria-label="阅读版式">{icons.book}</button>
          <button aria-label="Web版式">{icons.globe}</button>
          <button aria-label="写作模式">{icons.pen}</button>
        </ViewIcons>
        <Rule $h={14} />
        <Rule $h={0} $m={6} />
        <StatusItem aria-label="适应页面" $gap={8}>{icons.fit}</StatusItem>
        <StatusItem $gap={14}>90% <Caret /></StatusItem>
        <button aria-label="缩小">{icons.minus}</button>
        <ZoomSlider type="range" aria-label="显示比例" defaultValue={41} />
        <button aria-label="放大">{icons.plus}</button>
        <Rule $h={0} $m={6} />
        <button aria-label="全屏">{icons.full}</button>
      </Status>

      <Ime>CH <Icon w={10} h={12}><path d="M4 1c3 3 3 6-3.500 8.500 5 2.500 8.500 0 8.500-3.500S7 1.500 4 1z" /></Icon> 简</Ime>
      <Watermark>
        <svg width="46" height="42" viewBox="0 0 46 42">
          <defs>
            <linearGradient id="sky" x1="0" y1="1" x2="1" y2="0"><stop offset="0" stopColor="#3f6fc4" /><stop offset="1" stopColor="#4fc0ee" /></linearGradient>
            <linearGradient id="leaf" x1="0" y1="1" x2="1" y2="0"><stop offset="0" stopColor="#e6d64a" /><stop offset="1" stopColor="#2fa866" /></linearGradient>
          </defs>
          <path d="M44 1C28 0 5 6 2 22c-1 5 1 8 4 9C4 18 20 6 44 1z" fill="url(#sky)" />
          <path d="M6 31c1-12 14-19 26-15-7-1-12 2-13 7 3-3 8-1 7 3-3 7-13 10-20 5z" fill="url(#sky)" />
          <path d="M35 11c12 8 10 25-29 28 15-2 25-7 27-14 1-5-1-8-6-9 3-1 6-2 8-5z" fill="url(#leaf)" />
        </svg>
        <div>极光下载站<small>www.xz7.com</small></div>
      </Watermark>
      <MouseCursor width="14" height="20" viewBox="0 0 14 20"><path d="M1 1v15.500l3.500-3.500 2.500 5.500 2.500-1-2.500-5.500h5z" fill="#fff" stroke="#111" /></MouseCursor>
    </Shell>
  );
}
